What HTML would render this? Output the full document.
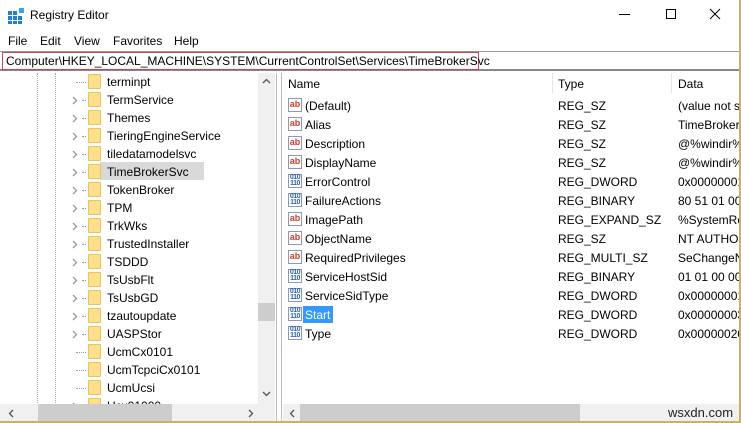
<!DOCTYPE html><html><head><style>
*{margin:0;padding:0;box-sizing:border-box}
body{width:741px;height:423px;overflow:hidden;background:#fff;font-family:"Liberation Sans",sans-serif;font-size:12px;color:#000;position:relative}
.a{position:absolute;white-space:nowrap}
.fold{position:absolute;width:13px;height:15px;background:#ffe08a;border:1px solid #e8c45c;border-radius:1px}
.chev{position:absolute}
.ico{position:absolute;width:14px;height:14px;border:1px solid #8a9ab0;background:#fff;font-size:9px;font-weight:bold;line-height:11px;text-align:center}
.ab{color:#c8412c}
.bin{color:#2b5fb5;font-size:7px;line-height:6px;letter-spacing:-0.5px}
</style></head><body>
<svg class="a" style="left:8px;top:8px" width="16" height="16"><g fill="#1e7fd8"><rect x="0" y="3" width="4" height="4"/><rect x="5" y="3" width="4" height="4"/><rect x="0" y="8" width="4" height="4"/><rect x="5" y="8" width="4" height="4"/><rect x="0" y="13" width="4" height="3"/><rect x="5" y="13" width="4" height="3"/><rect x="10" y="8" width="4" height="4"/><rect x="10" y="13" width="4" height="3"/><rect x="11" y="0" width="5" height="5" fill="#3aa0f0"/></g></svg>
<div class="a" style="left:30px;top:8px;font-size:12px">Registry Editor</div>
<div class="a" style="left:619px;top:14px;width:11px;height:1px;background:#000"></div>
<div class="a" style="left:666px;top:9px;width:10px;height:10px;border:1px solid #000"></div>
<svg class="a" style="left:709px;top:8px" width="12" height="12"><path d="M1 1L11 11M11 1L1 11" stroke="#000" stroke-width="1"/></svg>
<div class="a" style="left:8px;top:34px">File</div>
<div class="a" style="left:40px;top:34px">Edit</div>
<div class="a" style="left:74px;top:34px">View</div>
<div class="a" style="left:113px;top:34px">Favorites</div>
<div class="a" style="left:174px;top:34px">Help</div>
<div class="a" style="left:0;top:51px;width:741px;height:20px;border-top:1px solid #999;border-bottom:2px solid #888"></div>
<div class="a" style="left:2px;top:52px;width:477px;height:18px;border:1px solid #c8485a"></div>
<div class="a" style="left:6px;top:54px">Computer\HKEY_LOCAL_MACHINE\SYSTEM\CurrentControlSet\Services\TimeBrokerSvc</div>
<div class="a" style="left:37px;top:73px;height:332px;border-left:1px dotted #aaa"></div>
<div class="a" style="left:55px;top:73px;height:332px;border-left:1px dotted #aaa"></div>
<div class="a" style="left:100px;top:162px;width:104px;height:18px;background:#d9d9d9"></div>
<div id="tree"></div>
<div class="a" style="left:258px;top:73px;width:17px;height:332px;background:#f0f0f0"></div>
<div class="a" style="left:258px;top:303px;width:17px;height:18px;background:#cdcdcd"></div>
<svg class="a" style="left:262px;top:78px" width="9" height="6"><path d="M1 5L4.5 1.5L8 5" fill="none" stroke="#555" stroke-width="1.3"/></svg>
<svg class="a" style="left:262px;top:391px" width="9" height="6"><path d="M1 1L4.5 4.5L8 1" fill="none" stroke="#555" stroke-width="1.3"/></svg>
<div class="a" style="left:0;top:404px;width:275px;height:17px;background:#f0f0f0"></div>
<div class="a" style="left:38px;top:404px;width:134px;height:17px;background:#cdcdcd"></div>
<svg class="a" style="left:8px;top:409px" width="6" height="9"><path d="M5 1L1.5 4.5L5 8" fill="none" stroke="#555" stroke-width="1.3"/></svg>
<svg class="a" style="left:248px;top:409px" width="6" height="9"><path d="M1 1L4.5 4.5L1 8" fill="none" stroke="#555" stroke-width="1.3"/></svg>
<div class="a" style="left:276px;top:73px;width:6px;height:350px;background:#fff;border-left:1px solid #bbb;border-right:1px solid #bbb"></div>
<div class="a" style="left:288px;top:77px">Name</div>
<div class="a" style="left:552px;top:73px;height:20px;border-left:1px solid #e5e5e5"></div>
<div class="a" style="left:558px;top:77px">Type</div>
<div class="a" style="left:671px;top:73px;height:20px;border-left:1px solid #e5e5e5"></div>
<div class="a" style="left:678px;top:77px">Data</div>
<div id="list"></div>
<div class="a" style="left:283px;top:404px;width:456px;height:17px;background:#f0f0f0"></div>
<div class="a" style="left:300px;top:404px;width:280px;height:17px;background:#cdcdcd"></div>
<svg class="a" style="left:289px;top:409px" width="6" height="9"><path d="M5 1L1.5 4.5L5 8" fill="none" stroke="#555" stroke-width="1.3"/></svg>
<div class="a" style="left:668px;top:405px;font-size:13px;color:#222">wsxdn.com</div>
<div class="a" style="left:739px;top:0;width:2px;height:423px;background:#c8b070"></div>
<div class="a" style="left:0;top:421px;width:741px;height:2px;background:#c8b070"></div>
<script>
var t=["terminpt","TermService","Themes","TieringEngineService","tiledatamodelsvc","TimeBrokerSvc","TokenBroker","TPM","TrkWks","TrustedInstaller","TSDDD","TsUsbFlt","TsUsbGD","tzautoupdate","UASPStor","UcmCx0101","UcmTcpciCx0101","UcmUcsi","Ucx01000"];
var noc={0:1,15:1,16:1,17:1},h="";
t.forEach(function(n,i){var y=73+i*18;
h+='<div class="a" style="left:'+(noc[i]?76:82)+'px;top:'+(y+9)+'px;width:'+(noc[i]?10:4)+'px;border-top:1px dotted #999"></div>';
if(!noc[i])h+='<svg class="chev" style="left:72px;top:'+(y+5)+'px" width="6" height="9"><path d="M1 1L4.5 4.5L1 8" fill="none" stroke="#999" stroke-width="1.3"/></svg>';
h+='<div class="fold" style="left:88px;top:'+(y+1)+'px"></div>';
h+='<div class="a" style="left:107px;top:'+(y+2)+'px">'+n+'</div>';});
document.getElementById('tree').innerHTML=h;
var r=[["(Default)","REG_SZ","(value not s",1],["Alias","REG_SZ","TimeBroker",1],["Description","REG_SZ","@%windir%",1],["DisplayName","REG_SZ","@%windir%",1],["ErrorControl","REG_DWORD","0x00000001",0],["FailureActions","REG_BINARY","80 51 01 00",0],["ImagePath","REG_EXPAND_SZ","%SystemRo",1],["ObjectName","REG_SZ","NT AUTHO",1],["RequiredPrivileges","REG_MULTI_SZ","SeChangeN",1],["ServiceHostSid","REG_BINARY","01 01 00 00",0],["ServiceSidType","REG_DWORD","0x00000001",0],["Start","REG_DWORD","0x00000003",0],["Type","REG_DWORD","0x00000020",0]];
h="";r.forEach(function(e,i){var y=96+i*19;
h+='<div class="ico '+(e[3]?'ab':'bin')+'" style="left:288px;top:'+(y+2)+'px">'+(e[3]?'ab':'010<br>110')+'</div>';
if(e[0]=="Start")h+='<div class="a" style="left:303px;top:'+(y+1)+'px;width:30px;height:17px;background:#3399ff"></div>';
h+='<div class="a" style="left:305px;top:'+(y+3)+'px;'+(e[0]=="Start"?'color:#fff':'')+'">'+e[0]+'</div>';
h+='<div class="a" style="left:558px;top:'+(y+3)+'px">'+e[1]+'</div>';
h+='<div class="a" style="left:678px;top:'+(y+3)+'px">'+e[2]+'</div>';});
document.getElementById('list').innerHTML=h;
</script>
</body></html>
